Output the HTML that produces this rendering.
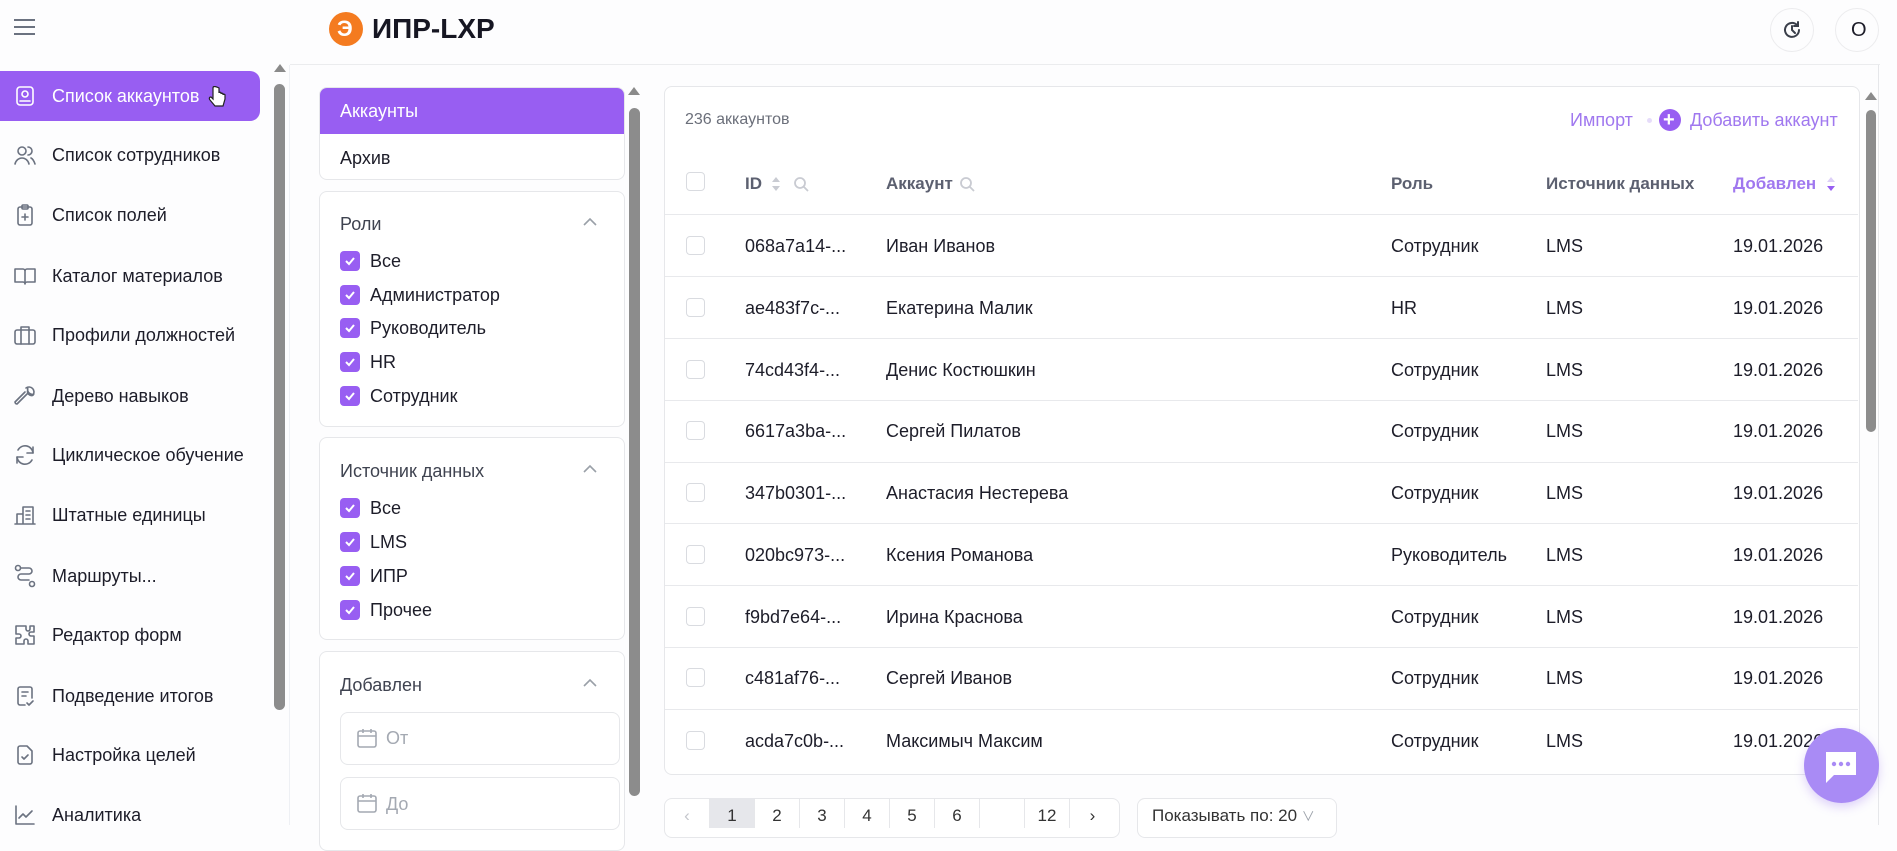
<!DOCTYPE html>
<html><head><meta charset="utf-8"><style>
*{box-sizing:border-box;margin:0;padding:0}
body{width:1897px;height:825px;overflow:hidden;background:#fdfdfe;font-family:"Liberation Sans","Noto Sans CJK SC",sans-serif;color:#1d1d29;position:relative;font-size:18px}
.a{position:absolute}
.t{position:absolute;white-space:nowrap;line-height:20px}
.h{font-size:17px;color:#5c6070;font-weight:bold}
.ico{position:absolute;left:13px;width:24px;height:24px}
.ico svg{width:24px;height:24px;fill:none;stroke:#6b7280;stroke-width:1.6;stroke-linecap:round;stroke-linejoin:round}
.cb{position:absolute;left:340px;width:20px;height:20px;border-radius:4px;background:#985ef2}
.cb svg{position:absolute;left:3px;top:3px;width:14px;height:14px}
.card{position:absolute;border:1px solid #e6e7ea;border-radius:8px;background:#fff}
.rc{position:absolute;left:686px;width:19px;height:19px;border:1px solid #d9dbe0;border-radius:4px;background:#fff}
.line{position:absolute;left:665px;width:1193px;height:1px;background:#e8e9ec}
.pg{position:absolute;top:798px;width:45px;height:30px;border-right:1px solid #e6e7ea;text-align:center;font-size:17px;padding-top:8px;color:#333}
</style></head><body>
<!-- header -->
<div class="a" style="left:14px;top:19px;width:21px;height:2px;background:#6b7280;box-shadow:0 7px 0 #6b7280,0 14px 0 #6b7280"></div>
<div class="a" style="left:329px;top:12px;width:34px;height:34px;border-radius:50%;background:#f47b20"></div>
<div class="t" style="left:337px;top:17px;color:#fff;font-weight:bold;font-size:22px;line-height:24px">Э</div>
<div class="t" style="left:372px;top:14px;font-size:28px;line-height:30px;font-weight:bold;color:#161622">ИПР-LXP</div>
<div class="a" style="left:1770px;top:8px;width:44px;height:44px;border-radius:50%;border:1px solid #ececee"></div>
<svg class="a" style="left:1781px;top:19px" width="22" height="22" viewBox="0 0 22 22" fill="none" stroke="#3a3f4a" stroke-width="2" stroke-linecap="round"><path d="M18 11a7 7 0 1 1-2-5"/><path d="M11 7v4l3 3"/><path d="M17 3v4h-4"/></svg>
<div class="a" style="left:1835px;top:8px;width:44px;height:44px;border-radius:50%;border:1px solid #ececee"></div>
<div class="t" style="left:1851px;top:20px;font-size:20px">O</div>
<div class="a" style="left:290px;top:64px;width:1590px;height:1px;background:#ebecee"></div>

<!-- sidebar -->
<div class="a" style="left:0;top:71px;width:260px;height:50px;background:#985ef2;border-radius:0 10px 10px 0"></div>
<div class="ico" style="top:84px"><svg viewBox="0 0 24 24" style="stroke:#fff"><rect x="4" y="3" width="16" height="18" rx="3"/><circle cx="12" cy="10" r="3"/><path d="M7 17h10"/></svg></div>
<div class="t" style="left:52px;top:86px;color:#fff">Список аккаунтов</div>
<svg class="a" style="left:207px;top:86px" width="20" height="24" viewBox="0 0 20 24"><path d="M6 2v11l-2-2c-2 0-2 2-1 3l5 6h8l2-7v-4c0-1-2-1-2 0v-1c0-1-2-1-2 0V7c0-1-2-1-2 0V2C8 0 6 0 6 2z" fill="#fff" stroke="#222" stroke-width="1.2"/></svg>

<div class="ico" style="top:143px"><svg viewBox="0 0 24 24"><circle cx="9" cy="8" r="4"/><path d="M2 21c1-4 4-6 7-6s6 2 7 6"/><path d="M15 4a4 4 0 0 1 0 8M18 15c2 1 3 3 4 6"/></svg></div>
<div class="t" style="left:52px;top:145px">Список сотрудников</div>
<div class="ico" style="top:203px"><svg viewBox="0 0 24 24"><rect x="5" y="4" width="14" height="18" rx="2"/><rect x="9" y="2" width="6" height="4" rx="1"/><path d="M12 11v6M9 14h6"/></svg></div>
<div class="t" style="left:52px;top:205px">Список полей</div>
<div class="ico" style="top:264px"><svg viewBox="0 0 24 24"><path d="M2 5h8a2 2 0 0 1 2 2v13a2 2 0 0 0-2-2H2zM22 5h-8a2 2 0 0 0-2 2v13a2 2 0 0 1 2-2h8z"/></svg></div>
<div class="t" style="left:52px;top:266px">Каталог материалов</div>
<div class="ico" style="top:323px"><svg viewBox="0 0 24 24"><rect x="2" y="7" width="20" height="14" rx="2"/><path d="M8 7V4h8v3M8 7v14M16 7v14"/></svg></div>
<div class="t" style="left:52px;top:325px">Профили должностей</div>
<div class="ico" style="top:384px"><svg viewBox="0 0 24 24"><path d="M14.7 6.3a4 4 0 0 0 5 5l1-1a5 5 0 0 1-6-6zM14 10L4 20a2 2 0 0 1-2-2L12 8"/><path d="M13 4a5 5 0 0 1 7 7"/></svg></div>
<div class="t" style="left:52px;top:386px">Дерево навыков</div>
<div class="ico" style="top:443px"><svg viewBox="0 0 24 24"><path d="M20 10a8 8 0 0 0-15-3M4 14a8 8 0 0 0 15 3"/><path d="M20 4v6h-6M4 20v-6h6"/></svg></div>
<div class="t" style="left:52px;top:445px">Циклическое обучение</div>
<div class="ico" style="top:503px"><svg viewBox="0 0 24 24"><path d="M2 21h20M4 21V11h6M10 21V4h10v17M13 8h4M13 12h4M13 16h4"/></svg></div>
<div class="t" style="left:52px;top:505px">Штатные единицы</div>
<div class="ico" style="top:564px"><svg viewBox="0 0 24 24"><circle cx="5" cy="4" r="2.5"/><circle cx="19" cy="20" r="2.5"/><path d="M8 4h8a3 3 0 0 1 0 6H8a3 3 0 0 0 0 6h8"/></svg></div>
<div class="t" style="left:52px;top:566px">Маршруты...</div>
<div class="ico" style="top:623px"><svg viewBox="0 0 24 24"><path d="M9 3h4v3a2 2 0 0 0 4 0V3h4v6h-3a2 2 0 0 0 0 4h3v8h-6v-3a2 2 0 0 0-4 0v3H3v-6h3a2 2 0 0 0 0-4H3V3z"/></svg></div>
<div class="t" style="left:52px;top:625px">Редактор форм</div>
<div class="ico" style="top:684px"><svg viewBox="0 0 24 24"><path d="M12 21H7a2 2 0 0 1-2-2V5a2 2 0 0 1 2-2h10a2 2 0 0 1 2 2v9"/><path d="M9 8h6M9 12h4M14 19l2 2 4-4"/></svg></div>
<div class="t" style="left:52px;top:686px">Подведение итогов</div>
<div class="ico" style="top:743px"><svg viewBox="0 0 24 24"><path d="M14 3H7a2 2 0 0 0-2 2v14a2 2 0 0 0 2 2h10a2 2 0 0 0 2-2V8z"/><path d="M9 14l2 2 4-4"/></svg></div>
<div class="t" style="left:52px;top:745px">Настройка целей</div>
<div class="ico" style="top:803px"><svg viewBox="0 0 24 24"><path d="M3 3v18h18M6 15l4-4 3 3 6-6"/></svg></div>
<div class="t" style="left:52px;top:805px">Аналитика</div>
<div class="a" style="left:274px;top:64px;width:0;height:0;border-left:6px solid transparent;border-right:6px solid transparent;border-bottom:8px solid #8a8a8a"></div>
<div class="a" style="left:274px;top:84px;width:11px;height:626px;border-radius:6px;background:#8c8c8c"></div>
<div class="a" style="left:289px;top:65px;width:1px;height:760px;background:#eef0f4"></div>

<!-- filters -->
<div class="card" style="left:319px;top:87px;width:306px;height:93px;overflow:hidden">
<div class="a" style="left:0;top:0;width:306px;height:46px;background:#985ef2"></div>
<div class="t" style="left:20px;top:13px;color:#fff">Аккаунты</div>
<div class="t" style="left:20px;top:60px">Архив</div></div>

<div class="card" style="left:319px;top:191px;width:306px;height:236px"></div>
<div class="t" style="left:340px;top:214px;color:#3f4350">Роли</div>
<svg class="a" style="left:582px;top:217px" width="16" height="10"><path d="M2 8l6-6 6 6" fill="none" stroke="#9aa0a8" stroke-width="1.6"/></svg>
<div class="cb" style="top:251px"><svg viewBox="0 0 14 14"><path d="M3 7l3 3 5-6" fill="none" stroke="#fff" stroke-width="2"/></svg></div><div class="t" style="left:370px;top:251px">Все</div>
<div class="cb" style="top:285px"><svg viewBox="0 0 14 14"><path d="M3 7l3 3 5-6" fill="none" stroke="#fff" stroke-width="2"/></svg></div><div class="t" style="left:370px;top:285px">Администратор</div>
<div class="cb" style="top:318px"><svg viewBox="0 0 14 14"><path d="M3 7l3 3 5-6" fill="none" stroke="#fff" stroke-width="2"/></svg></div><div class="t" style="left:370px;top:318px">Руководитель</div>
<div class="cb" style="top:352px"><svg viewBox="0 0 14 14"><path d="M3 7l3 3 5-6" fill="none" stroke="#fff" stroke-width="2"/></svg></div><div class="t" style="left:370px;top:352px">HR</div>
<div class="cb" style="top:386px"><svg viewBox="0 0 14 14"><path d="M3 7l3 3 5-6" fill="none" stroke="#fff" stroke-width="2"/></svg></div><div class="t" style="left:370px;top:386px">Сотрудник</div>

<div class="card" style="left:319px;top:437px;width:306px;height:203px"></div>
<div class="t" style="left:340px;top:461px;color:#3f4350">Источник данных</div>
<svg class="a" style="left:582px;top:464px" width="16" height="10"><path d="M2 8l6-6 6 6" fill="none" stroke="#9aa0a8" stroke-width="1.6"/></svg>
<div class="cb" style="top:498px"><svg viewBox="0 0 14 14"><path d="M3 7l3 3 5-6" fill="none" stroke="#fff" stroke-width="2"/></svg></div><div class="t" style="left:370px;top:498px">Все</div>
<div class="cb" style="top:532px"><svg viewBox="0 0 14 14"><path d="M3 7l3 3 5-6" fill="none" stroke="#fff" stroke-width="2"/></svg></div><div class="t" style="left:370px;top:532px">LMS</div>
<div class="cb" style="top:566px"><svg viewBox="0 0 14 14"><path d="M3 7l3 3 5-6" fill="none" stroke="#fff" stroke-width="2"/></svg></div><div class="t" style="left:370px;top:566px">ИПР</div>
<div class="cb" style="top:600px"><svg viewBox="0 0 14 14"><path d="M3 7l3 3 5-6" fill="none" stroke="#fff" stroke-width="2"/></svg></div><div class="t" style="left:370px;top:600px">Прочее</div>

<div class="card" style="left:319px;top:651px;width:306px;height:200px"></div>
<div class="t" style="left:340px;top:675px;color:#3f4350">Добавлен</div>
<svg class="a" style="left:582px;top:678px" width="16" height="10"><path d="M2 8l6-6 6 6" fill="none" stroke="#9aa0a8" stroke-width="1.6"/></svg>
<div class="card" style="left:340px;top:712px;width:280px;height:53px"></div>
<svg class="a" style="left:356px;top:727px" width="22" height="22" viewBox="0 0 22 22" fill="none" stroke="#a4a9b2" stroke-width="1.6"><rect x="2" y="4" width="18" height="16" rx="2"/><path d="M2 9h18M7 2v4M15 2v4"/></svg>
<div class="t" style="left:386px;top:728px;color:#a4a9b2">От</div>
<div class="card" style="left:340px;top:777px;width:280px;height:53px"></div>
<svg class="a" style="left:356px;top:792px" width="22" height="22" viewBox="0 0 22 22" fill="none" stroke="#a4a9b2" stroke-width="1.6"><rect x="2" y="4" width="18" height="16" rx="2"/><path d="M2 9h18M7 2v4M15 2v4"/></svg>
<div class="t" style="left:386px;top:794px;color:#a4a9b2">До</div>
<div class="a" style="left:628px;top:87px;width:0;height:0;border-left:6px solid transparent;border-right:6px solid transparent;border-bottom:8px solid #8a8a8a"></div>
<div class="a" style="left:629px;top:108px;width:11px;height:688px;border-radius:6px;background:#8c8c8c"></div>

<!-- table -->
<div class="card" style="left:664px;top:86px;width:1196px;height:689px"></div>
<div class="t" style="left:685px;top:110px;font-size:16px;color:#6b6f7a">236 аккаунтов</div>
<div class="t" style="left:1570px;top:110px;color:#a078ef">Импорт</div>
<div class="a" style="left:1647px;top:118px;width:5px;height:5px;border-radius:50%;background:#e6dcfa"></div>
<div class="a" style="left:1659px;top:109px;width:22px;height:22px;border-radius:50%;background:#985ef2"></div>
<div class="t" style="left:1663px;top:110px;color:#fff;font-weight:bold;font-size:20px">+</div>
<div class="t" style="left:1690px;top:110px;color:#a078ef">Добавить аккаунт</div>

<div class="rc" style="top:172px"></div>
<div class="t h" style="left:745px;top:174px">ID</div>
<svg class="a" style="left:770px;top:175px" width="12" height="18"><path d="M6 2l4 5H2zM6 16l4-5H2z" fill="#c9cbd2"/></svg>
<svg class="a" style="left:793px;top:176px" width="16" height="16" fill="none" stroke="#c9cbd2" stroke-width="1.8"><circle cx="7" cy="7" r="5"/><path d="M11 11l4 4"/></svg>
<div class="t h" style="left:886px;top:174px">Аккаунт</div>
<svg class="a" style="left:959px;top:176px" width="16" height="16" fill="none" stroke="#c9cbd2" stroke-width="1.8"><circle cx="7" cy="7" r="5"/><path d="M11 11l4 4"/></svg>
<div class="t h" style="left:1391px;top:174px">Роль</div>
<div class="t h" style="left:1546px;top:174px">Источник данных</div>
<div class="t h" style="left:1733px;top:174px;color:#a078ef">Добавлен</div>
<svg class="a" style="left:1825px;top:175px" width="12" height="18"><path d="M6 2l4 5H2z" fill="#ddd0f8"/><path d="M6 16l4-5H2z" fill="#985ef2"/></svg>
<div class="line" style="top:214px"></div>

<div class="rc" style="top:236px"></div><div class="t" style="left:745px;top:236px">068a7a14-...</div><div class="t" style="left:886px;top:236px">Иван Иванов</div><div class="t" style="left:1391px;top:236px">Сотрудник</div><div class="t" style="left:1546px;top:236px">LMS</div><div class="t" style="left:1733px;top:236px">19.01.2026</div><div class="line" style="top:276px"></div>
<div class="rc" style="top:298px"></div><div class="t" style="left:745px;top:298px">ae483f7c-...</div><div class="t" style="left:886px;top:298px">Екатерина Малик</div><div class="t" style="left:1391px;top:298px">HR</div><div class="t" style="left:1546px;top:298px">LMS</div><div class="t" style="left:1733px;top:298px">19.01.2026</div><div class="line" style="top:338px"></div>
<div class="rc" style="top:360px"></div><div class="t" style="left:745px;top:360px">74cd43f4-...</div><div class="t" style="left:886px;top:360px">Денис Костюшкин</div><div class="t" style="left:1391px;top:360px">Сотрудник</div><div class="t" style="left:1546px;top:360px">LMS</div><div class="t" style="left:1733px;top:360px">19.01.2026</div><div class="line" style="top:400px"></div>
<div class="rc" style="top:421px"></div><div class="t" style="left:745px;top:421px">6617a3ba-...</div><div class="t" style="left:886px;top:421px">Сергей Пилатов</div><div class="t" style="left:1391px;top:421px">Сотрудник</div><div class="t" style="left:1546px;top:421px">LMS</div><div class="t" style="left:1733px;top:421px">19.01.2026</div><div class="line" style="top:462px"></div>
<div class="rc" style="top:483px"></div><div class="t" style="left:745px;top:483px">347b0301-...</div><div class="t" style="left:886px;top:483px">Анастасия Нестерева</div><div class="t" style="left:1391px;top:483px">Сотрудник</div><div class="t" style="left:1546px;top:483px">LMS</div><div class="t" style="left:1733px;top:483px">19.01.2026</div><div class="line" style="top:523px"></div>
<div class="rc" style="top:545px"></div><div class="t" style="left:745px;top:545px">020bc973-...</div><div class="t" style="left:886px;top:545px">Ксения Романова</div><div class="t" style="left:1391px;top:545px">Руководитель</div><div class="t" style="left:1546px;top:545px">LMS</div><div class="t" style="left:1733px;top:545px">19.01.2026</div><div class="line" style="top:585px"></div>
<div class="rc" style="top:607px"></div><div class="t" style="left:745px;top:607px">f9bd7e64-...</div><div class="t" style="left:886px;top:607px">Ирина Краснова</div><div class="t" style="left:1391px;top:607px">Сотрудник</div><div class="t" style="left:1546px;top:607px">LMS</div><div class="t" style="left:1733px;top:607px">19.01.2026</div><div class="line" style="top:647px"></div>
<div class="rc" style="top:668px"></div><div class="t" style="left:745px;top:668px">c481af76-...</div><div class="t" style="left:886px;top:668px">Сергей Иванов</div><div class="t" style="left:1391px;top:668px">Сотрудник</div><div class="t" style="left:1546px;top:668px">LMS</div><div class="t" style="left:1733px;top:668px">19.01.2026</div><div class="line" style="top:709px"></div>
<div class="rc" style="top:731px"></div><div class="t" style="left:745px;top:731px">acda7c0b-...</div><div class="t" style="left:886px;top:731px">Максимыч Максим</div><div class="t" style="left:1391px;top:731px">Сотрудник</div><div class="t" style="left:1546px;top:731px">LMS</div><div class="t" style="left:1733px;top:731px">19.01.2026</div>

<div class="a" style="left:1865px;top:92px;width:0;height:0;border-left:6px solid transparent;border-right:6px solid transparent;border-bottom:8px solid #8a8a8a"></div>
<div class="a" style="left:1866px;top:110px;width:10px;height:322px;border-radius:6px;background:#8c8c8c"></div>
<div class="a" style="left:1878px;top:65px;width:1px;height:760px;background:#e6e7ea"></div>

<!-- pagination -->
<div class="card" style="left:664px;top:798px;width:456px;height:40px;overflow:hidden"></div>
<div class="pg" style="left:665px;color:#c4c6cc">‹</div>
<div class="pg" style="left:710px;background:#e6e7eb">1</div>
<div class="pg" style="left:755px">2</div>
<div class="pg" style="left:800px">3</div>
<div class="pg" style="left:845px">4</div>
<div class="pg" style="left:890px">5</div>
<div class="pg" style="left:935px">6</div>
<div class="pg" style="left:980px"></div>
<div class="pg" style="left:1025px">12</div>
<div class="pg" style="left:1070px;border-right:none">›</div>
<div class="card" style="left:1137px;top:798px;width:200px;height:40px"></div>
<div class="t" style="left:1152px;top:806px;font-size:17px;color:#333">Показывать по: 20 <span style="color:#9aa0a8;font-size:13px">∨</span></div>

<!-- chat -->
<div class="a" style="left:1804px;top:728px;width:75px;height:75px;border-radius:50%;background:#a98bf5;box-shadow:0 4px 10px rgba(150,110,240,.3)"></div>
<svg class="a" style="left:1822px;top:748px" width="38" height="38" viewBox="0 0 38 38"><path d="M4 4h30v23H12l-8 8z" fill="#fff"/><circle cx="12" cy="16" r="2.2" fill="#a98bf5"/><circle cx="19" cy="16" r="2.2" fill="#a98bf5"/><circle cx="26" cy="16" r="2.2" fill="#a98bf5"/></svg>
</body></html>
